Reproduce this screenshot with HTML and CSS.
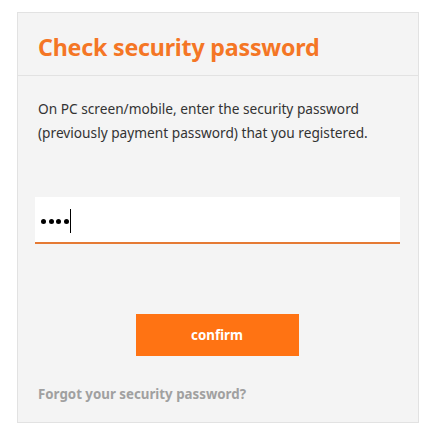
FILE: index.html
```html
<!DOCTYPE html>
<html>
<head>
<meta charset="utf-8">
<link rel="stylesheet" href="styles.css">
</head>
<body>
<div class="card">
  <div class="head">
    <h1 class="title">Check security password</h1>
  </div>
  <div class="body">
    <p class="desc">On PC screen/mobile, enter the security password<br>(previously payment password) that you registered.</p>
    <div class="field">
      <span class="dot"></span><span class="dot"></span><span class="dot"></span><span class="dot"></span><span class="caret"></span>
    </div>
    <div class="actions">
      <button class="btn">confirm</button>
    </div>
    <a class="forgot">Forgot your security password?</a>
  </div>
</div>
</body>
</html>
```
FILE: styles.css
```css
html, body { margin: 0; padding: 0; background: #fff; }
body { padding: 12px 16px 0 17px; font-family: "Noto Sans", "Open Sans", sans-serif; }
.card {
  width: 402px;
  height: 411px;
  box-sizing: border-box;
  background: #f4f4f4;
  border: 1px solid #e2e2e2;
}
.head {
  height: 63px;
  box-sizing: border-box;
  border-bottom: 1px solid #e2e2e2;
  padding: 19px 0 0 20px;
}
.title {
  margin: 0;
  font-size: 23.2px;
  line-height: 30px;
  font-weight: 700;
  color: #f47625;
  letter-spacing: -0.2px;
}
.body { padding: 0 17px 0 20px; }
.desc {
  margin: 21px 0 0 0;
  font-size: 13.7px;
  line-height: 24px;
  color: #333;
}
.field {
  margin: 52px 0 0 -3px;
  width: 365px;
  height: 47px;
  background: #fff;
  border-bottom: 2px solid #e57a34;
  box-sizing: border-box;
  display: flex;
  align-items: center;
  padding-left: 6px;
  padding-top: 3px;
}
.dot { width: 5px; height: 5px; border-radius: 50%; background: #000; margin-right: 2.6px; }
.caret { width: 1px; height: 24px; background: #000; margin-left: -1px; }
.actions { display: flex; justify-content: center; margin-top: 70px; padding-right: 5px; }
.btn {
  width: 163px;
  height: 42px;
  border: 0;
  background: #ff7313;
  color: #fff;
  font-family: inherit;
  font-size: 13.3px;
  font-weight: 700;
  padding: 0;
}
.forgot {
  display: block;
  margin-top: 29px;
  font-size: 13.3px;
  font-weight: 700;
  color: #a0a0a0;
}
```
